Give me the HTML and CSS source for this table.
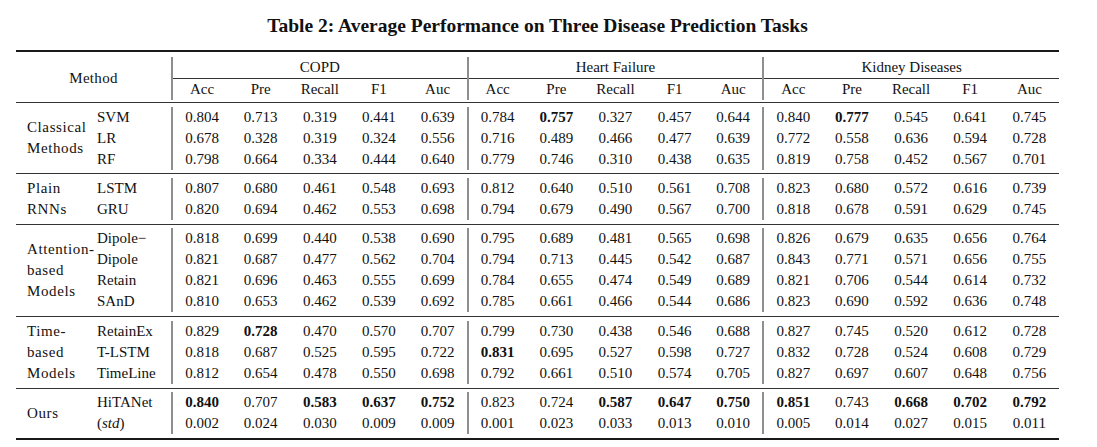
FILE: index.html
```html
<!DOCTYPE html>
<html lang="en">
<head>
<meta charset="utf-8">
<title>Table 2</title>
<link rel="stylesheet" href="styles.css">
</head>
<body>
<div class="page">
  <div class="title">Table 2: Average Performance on Three Disease Prediction Tasks</div>
  <table class="results">
    <colgroup>
      <col class="c-grp"><col class="c-model">
      <col><col><col><col><col>
      <col><col><col><col><col>
      <col><col><col><col><col>
    </colgroup>
    <tbody class="head">
      <tr class="pad top"><td colspan="17"></td></tr>
      <tr class="hrow1">
        <td class="method" colspan="2" rowspan="2">Method</td>
        <td class="task vl" colspan="5">COPD</td>
        <td class="task vl" colspan="5">Heart Failure</td>
        <td class="task vl" colspan="5">Kidney Diseases</td>
      </tr>
      <tr class="hrow2">
        <td class="num vl">Acc</td><td class="num">Pre</td><td class="num">Recall</td><td class="num">F1</td><td class="num">Auc</td>
        <td class="num vl">Acc</td><td class="num">Pre</td><td class="num">Recall</td><td class="num">F1</td><td class="num">Auc</td>
        <td class="num vl">Acc</td><td class="num">Pre</td><td class="num">Recall</td><td class="num">F1</td><td class="num">Auc</td>
      </tr>
      <tr class="pad hbot"><td colspan="17"></td></tr>
    </tbody>

    <tbody class="group">
      <tr class="pad mid"><td colspan="17"></td></tr>
      <tr>
        <td class="grp" rowspan="3"><div>Classical</div><div>Methods</div></td>
        <td class="model">SVM</td>
        <td class="num vl">0.804</td><td class="num">0.713</td><td class="num">0.319</td><td class="num">0.441</td><td class="num">0.639</td>
        <td class="num vl">0.784</td><td class="num b">0.757</td><td class="num">0.327</td><td class="num">0.457</td><td class="num">0.644</td>
        <td class="num vl">0.840</td><td class="num b">0.777</td><td class="num">0.545</td><td class="num">0.641</td><td class="num">0.745</td>
      </tr>
      <tr>
        <td class="model">LR</td>
        <td class="num vl">0.678</td><td class="num">0.328</td><td class="num">0.319</td><td class="num">0.324</td><td class="num">0.556</td>
        <td class="num vl">0.716</td><td class="num">0.489</td><td class="num">0.466</td><td class="num">0.477</td><td class="num">0.639</td>
        <td class="num vl">0.772</td><td class="num">0.558</td><td class="num">0.636</td><td class="num">0.594</td><td class="num">0.728</td>
      </tr>
      <tr>
        <td class="model">RF</td>
        <td class="num vl">0.798</td><td class="num">0.664</td><td class="num">0.334</td><td class="num">0.444</td><td class="num">0.640</td>
        <td class="num vl">0.779</td><td class="num">0.746</td><td class="num">0.310</td><td class="num">0.438</td><td class="num">0.635</td>
        <td class="num vl">0.819</td><td class="num">0.758</td><td class="num">0.452</td><td class="num">0.567</td><td class="num">0.701</td>
      </tr>
      <tr class="pad"><td colspan="17"></td></tr>
    </tbody>

    <tbody class="group">
      <tr class="pad mid"><td colspan="17"></td></tr>
      <tr>
        <td class="grp" rowspan="2"><div>Plain</div><div>RNNs</div></td>
        <td class="model">LSTM</td>
        <td class="num vl">0.807</td><td class="num">0.680</td><td class="num">0.461</td><td class="num">0.548</td><td class="num">0.693</td>
        <td class="num vl">0.812</td><td class="num">0.640</td><td class="num">0.510</td><td class="num">0.561</td><td class="num">0.708</td>
        <td class="num vl">0.823</td><td class="num">0.680</td><td class="num">0.572</td><td class="num">0.616</td><td class="num">0.739</td>
      </tr>
      <tr>
        <td class="model">GRU</td>
        <td class="num vl">0.820</td><td class="num">0.694</td><td class="num">0.462</td><td class="num">0.553</td><td class="num">0.698</td>
        <td class="num vl">0.794</td><td class="num">0.679</td><td class="num">0.490</td><td class="num">0.567</td><td class="num">0.700</td>
        <td class="num vl">0.818</td><td class="num">0.678</td><td class="num">0.591</td><td class="num">0.629</td><td class="num">0.745</td>
      </tr>
      <tr class="pad"><td colspan="17"></td></tr>
    </tbody>

    <tbody class="group">
      <tr class="pad mid"><td colspan="17"></td></tr>
      <tr>
        <td class="grp" rowspan="4"><div>Attention-</div><div>based</div><div>Models</div></td>
        <td class="model">Dipole−</td>
        <td class="num vl">0.818</td><td class="num">0.699</td><td class="num">0.440</td><td class="num">0.538</td><td class="num">0.690</td>
        <td class="num vl">0.795</td><td class="num">0.689</td><td class="num">0.481</td><td class="num">0.565</td><td class="num">0.698</td>
        <td class="num vl">0.826</td><td class="num">0.679</td><td class="num">0.635</td><td class="num">0.656</td><td class="num">0.764</td>
      </tr>
      <tr>
        <td class="model">Dipole</td>
        <td class="num vl">0.821</td><td class="num">0.687</td><td class="num">0.477</td><td class="num">0.562</td><td class="num">0.704</td>
        <td class="num vl">0.794</td><td class="num">0.713</td><td class="num">0.445</td><td class="num">0.542</td><td class="num">0.687</td>
        <td class="num vl">0.843</td><td class="num">0.771</td><td class="num">0.571</td><td class="num">0.656</td><td class="num">0.755</td>
      </tr>
      <tr>
        <td class="model">Retain</td>
        <td class="num vl">0.821</td><td class="num">0.696</td><td class="num">0.463</td><td class="num">0.555</td><td class="num">0.699</td>
        <td class="num vl">0.784</td><td class="num">0.655</td><td class="num">0.474</td><td class="num">0.549</td><td class="num">0.689</td>
        <td class="num vl">0.821</td><td class="num">0.706</td><td class="num">0.544</td><td class="num">0.614</td><td class="num">0.732</td>
      </tr>
      <tr>
        <td class="model">SAnD</td>
        <td class="num vl">0.810</td><td class="num">0.653</td><td class="num">0.462</td><td class="num">0.539</td><td class="num">0.692</td>
        <td class="num vl">0.785</td><td class="num">0.661</td><td class="num">0.466</td><td class="num">0.544</td><td class="num">0.686</td>
        <td class="num vl">0.823</td><td class="num">0.690</td><td class="num">0.592</td><td class="num">0.636</td><td class="num">0.748</td>
      </tr>
      <tr class="pad"><td colspan="17"></td></tr>
    </tbody>

    <tbody class="group">
      <tr class="pad mid"><td colspan="17"></td></tr>
      <tr>
        <td class="grp" rowspan="3"><div>Time-</div><div>based</div><div>Models</div></td>
        <td class="model">RetainEx</td>
        <td class="num vl">0.829</td><td class="num b">0.728</td><td class="num">0.470</td><td class="num">0.570</td><td class="num">0.707</td>
        <td class="num vl">0.799</td><td class="num">0.730</td><td class="num">0.438</td><td class="num">0.546</td><td class="num">0.688</td>
        <td class="num vl">0.827</td><td class="num">0.745</td><td class="num">0.520</td><td class="num">0.612</td><td class="num">0.728</td>
      </tr>
      <tr>
        <td class="model">T-LSTM</td>
        <td class="num vl">0.818</td><td class="num">0.687</td><td class="num">0.525</td><td class="num">0.595</td><td class="num">0.722</td>
        <td class="num vl b">0.831</td><td class="num">0.695</td><td class="num">0.527</td><td class="num">0.598</td><td class="num">0.727</td>
        <td class="num vl">0.832</td><td class="num">0.728</td><td class="num">0.524</td><td class="num">0.608</td><td class="num">0.729</td>
      </tr>
      <tr>
        <td class="model">TimeLine</td>
        <td class="num vl">0.812</td><td class="num">0.654</td><td class="num">0.478</td><td class="num">0.550</td><td class="num">0.698</td>
        <td class="num vl">0.792</td><td class="num">0.661</td><td class="num">0.510</td><td class="num">0.574</td><td class="num">0.705</td>
        <td class="num vl">0.827</td><td class="num">0.697</td><td class="num">0.607</td><td class="num">0.648</td><td class="num">0.756</td>
      </tr>
      <tr class="pad"><td colspan="17"></td></tr>
    </tbody>

    <tbody class="group last">
      <tr class="pad mid"><td colspan="17"></td></tr>
      <tr>
        <td class="grp" rowspan="2"><div>Ours</div></td>
        <td class="model">HiTANet</td>
        <td class="num vl b">0.840</td><td class="num">0.707</td><td class="num b">0.583</td><td class="num b">0.637</td><td class="num b">0.752</td>
        <td class="num vl">0.823</td><td class="num">0.724</td><td class="num b">0.587</td><td class="num b">0.647</td><td class="num b">0.750</td>
        <td class="num vl b">0.851</td><td class="num">0.743</td><td class="num b">0.668</td><td class="num b">0.702</td><td class="num b">0.792</td>
      </tr>
      <tr>
        <td class="model">(<i>std</i>)</td>
        <td class="num vl">0.002</td><td class="num">0.024</td><td class="num">0.030</td><td class="num">0.009</td><td class="num">0.009</td>
        <td class="num vl">0.001</td><td class="num">0.023</td><td class="num">0.033</td><td class="num">0.013</td><td class="num">0.010</td>
        <td class="num vl">0.005</td><td class="num">0.014</td><td class="num">0.027</td><td class="num">0.015</td><td class="num">0.011</td>
      </tr>
      <tr class="pad bottom"><td colspan="17"></td></tr>
    </tbody>
  </table>
</div>
</body>
</html>
```

FILE: styles.css
```css
html, body {
  margin: 0;
  padding: 0;
  background: #ffffff;
}

body {
  font-family: "Liberation Serif", "Times New Roman", serif;
  color: #111111;
}

.page {
  padding: 15px 0 0 16px;
  width: 1043px;
}

.title {
  font-weight: bold;
  font-size: 19.5px;
  line-height: 22px;
  text-align: center;
  margin: 0 0 13px 0;
}

.results {
  border-collapse: collapse;
  table-layout: fixed;
  width: 1043px;
  font-size: 15px;
}

.c-grp { width: 80px; }
.c-model { width: 76px; }

.results td {
  padding: 0;
  height: 21px;
  line-height: 21px;
  white-space: nowrap;
  vertical-align: middle;
}

.results tr.pad td {
  height: 3.7px;
  line-height: 0;
  font-size: 0;
}

.results tr.pad.top td {
  border-top: 2px solid #1a1a1a;
  height: 5px;
}

.results tr.hrow1 td { height: 20px; }
.results tr.hrow2 td { height: 21px; }

.results tr.pad.hbot td { height: 2px; }

.results tr.pad.mid td {
  border-top: 1px solid #333333;
}

.results tr.pad.bottom td {
  border-bottom: 2px solid #1a1a1a;
}

.method {
  text-align: center;
  letter-spacing: 0.3px;
}

.task {
  text-align: center;
  border-bottom: 1px solid #333333;
}

.num {
  text-align: center;
}

.vl {
  border-left: 2px solid #8f8f8f;
}

.b {
  font-weight: bold;
}

.grp {
  padding-left: 11px !important;
  overflow: visible;
  letter-spacing: 0.6px;
}

.grp div {
  line-height: 21px;
}

.model {
  padding-left: 1px !important;
}

.model i {
  font-style: italic;
}
```
